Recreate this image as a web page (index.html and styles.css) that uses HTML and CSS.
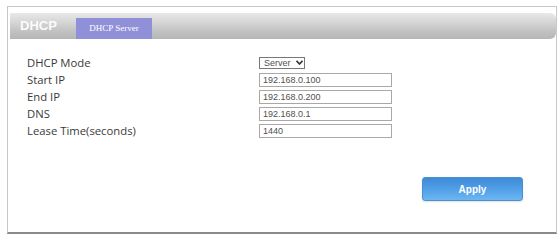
FILE: index.html
```html
<!DOCTYPE html>
<html>
<head>
<meta charset="utf-8">
<link rel="stylesheet" href="styles.css">
</head>
<body>
<div class="page">
  <div class="panel">
    <div class="bar">
      <span class="bar-title">DHCP</span>
      <span class="tab">DHCP Server</span>
    </div>
    <div class="form">
      <div class="row">
        <span class="label">DHCP Mode</span>
        <span class="select">Server <svg width="7" height="5" viewBox="0 0 7 5"><path d="M0.5 0.8 L3.5 4 L6.5 0.8" fill="none" stroke="#333" stroke-width="1.6"/></svg></span>
      </div>
      <div class="row">
        <span class="label">Start IP</span>
        <span class="input">192.168.0.100</span>
      </div>
      <div class="row">
        <span class="label">End IP</span>
        <span class="input">192.168.0.200</span>
      </div>
      <div class="row">
        <span class="label">DNS</span>
        <span class="input">192.168.0.1</span>
      </div>
      <div class="row">
        <span class="label">Lease Time(seconds)</span>
        <span class="input">1440</span>
      </div>
    </div>
    <div class="actions">
      <button class="apply">Apply</button>
    </div>
  </div>
</div>
</body>
</html>
```
FILE: styles.css
```css
html, body {
  margin: 0;
  padding: 0;
  background: #ffffff;
}
.page {
  padding: 6px 2px 0 7px;
}
.panel {
  width: 548px;
  height: 225px;
  border: 1px solid #c8c8c8;
  border-bottom: 2px solid #8a8a8a;
  display: flex;
  flex-direction: column;
}
.bar {
  margin: 6px 0 0 2px;
  height: 26px;
  border-radius: 0 6px 6px 0;
  background: linear-gradient(#e8e8e8 0%, #d6d6d6 35%, #c2c2c2 70%, #b6b6b6 100%);
  display: flex;
  align-items: flex-end;
  font-family: "Liberation Sans", Arial, sans-serif;
}
.bar-title {
  color: #fbfbfb;
  font-weight: bold;
  font-size: 13px;
  width: 56px;
  padding-left: 10px;
  line-height: 24px;
  align-self: center;
  box-sizing: border-box;
}
.tab {
  margin-left: 10px;
  width: 76px;
  height: 21px;
  background: #9090d8;
  color: #ffffff;
  font-family: "Liberation Serif", serif;
  font-size: 9px;
  line-height: 21px;
  text-align: center;
}
.form {
  margin-top: 15px;
  padding-left: 19px;
  display: flex;
  flex-direction: column;
}
.row {
  height: 17px;
  display: grid;
  grid-template-columns: 232px auto;
  align-items: center;
}
.label {
  font-family: "Open Sans", "DejaVu Sans", sans-serif;
  font-size: 11.3px;
  color: #3a3a3a;
}
.input, .select {
  box-sizing: border-box;
  height: 14px;
  border: 1px solid #a8a8a8;
  font-family: "Liberation Sans", Arial, sans-serif;
  font-size: 9px;
  line-height: 12px;
  color: #505050;
  padding-left: 3px;
  background: #fff;
}
.input {
  width: 133px;
}
.select {
  width: 46px;
  height: 12px;
  line-height: 10px;
  border-color: #777;
  display: flex;
  align-items: center;
  gap: 5px;
  padding-left: 4px;
}
.actions {
  margin-top: 38px;
  display: flex;
  justify-content: flex-end;
  padding-right: 33px;
}
.apply {
  width: 101px;
  height: 24px;
  border: 1px solid #4a90d0;
  border-radius: 3px;
  background: linear-gradient(#3f8ad8 0%, #509fe6 50%, #6cb6f2 100%);
  color: #ffffff;
  font-family: "Liberation Sans", Arial, sans-serif;
  font-weight: bold;
  font-size: 10px;
  padding: 0;
  box-shadow: 0 1px 2px rgba(0,0,0,0.12);
}
```
